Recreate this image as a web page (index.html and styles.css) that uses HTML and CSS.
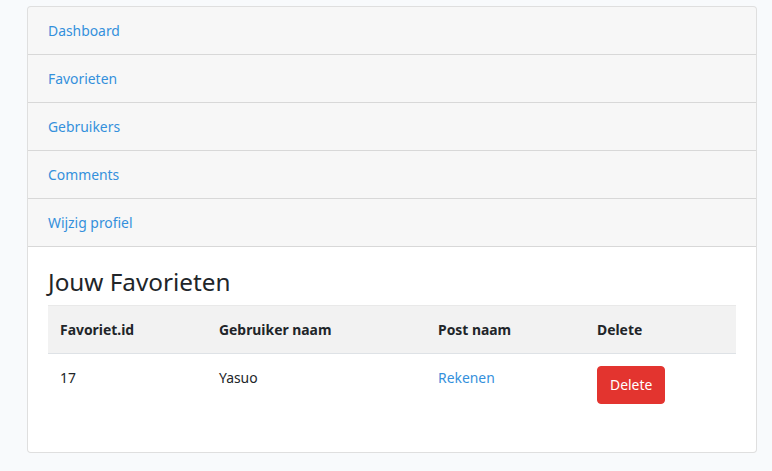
FILE: index.html
```html
<!DOCTYPE html>
<html>
<head>
<meta charset="utf-8">
<link rel="stylesheet" href="styles.css">
</head>
<body>
<div class="page">
  <div class="card">
    <div class="card-header"><a href="#">Dashboard</a></div>
    <div class="card-header"><a href="#">Favorieten</a></div>
    <div class="card-header"><a href="#">Gebruikers</a></div>
    <div class="card-header"><a href="#">Comments</a></div>
    <div class="card-header"><a href="#">Wijzig profiel</a></div>
    <div class="card-body">
      <h3 class="title">Jouw Favorieten</h3>
      <table class="table">
        <thead>
          <tr>
            <th class="c1">Favoriet.id</th>
            <th class="c2">Gebruiker naam</th>
            <th class="c3">Post naam</th>
            <th class="c4">Delete</th>
          </tr>
        </thead>
        <tbody>
          <tr>
            <td>17</td>
            <td>Yasuo</td>
            <td><a href="#">Rekenen</a></td>
            <td><button class="btn-danger">Delete</button></td>
          </tr>
        </tbody>
      </table>
    </div>
  </div>
</div>
</body>
</html>
```

FILE: styles.css
```css
html, body {
  margin: 0;
  padding: 0;
  background: #f8fafc;
  font-family: "Noto Sans", "Open Sans", sans-serif;
  font-size: 13.9px;
  line-height: 23.04px;
  color: #212529;
}
.page {
  padding: 6px 15px 0 27px;
}
.card {
  background: #fff;
  border: 1px solid rgba(0,0,0,.125);
  border-radius: 4px;
  overflow: hidden;
}
.card-header {
  background: rgba(0,0,0,.03);
  padding: 12px 20px;
  border-bottom: 1px solid rgba(0,0,0,.125);
}
a {
  color: #3490dc;
  text-decoration: none;
}
.card-body {
  padding: 20px;
}
.title {
  margin: 0 0 8px;
  font-size: 24.3px;
  line-height: 30.24px;
  font-weight: 400;
}
.table {
  width: 100%;
  border-collapse: collapse;
  margin-bottom: 16px;
}
.table th, .table td {
  padding: 12px;
  text-align: left;
  vertical-align: top;
}
.table thead th {
  background: #f2f2f2;
  font-weight: 700;
  line-height: 23px;
  border-bottom: 1px solid #dee2e6;
  border-top: 1px solid #e9e9e9;
}
.c1 { width: 135px; }
.c2 { width: 195px; }
.c3 { width: 135px; }
.btn-danger {
  font-family: inherit;
  font-size: 13.9px;
  line-height: 23.04px;
  padding: 6px 12px;
  border: 1px solid #e3342f;
  background: #e3342f;
  color: #fff;
  border-radius: 4px;
}
```
